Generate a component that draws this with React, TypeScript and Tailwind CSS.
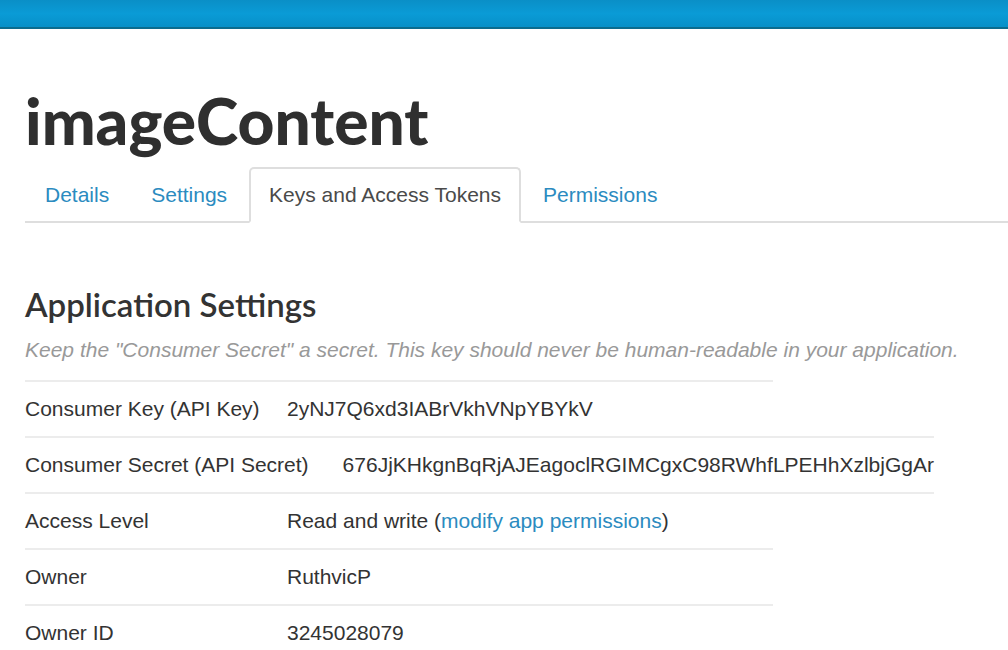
import React from 'react'

interface Row {
  label: string
  value: React.ReactNode
  wide?: boolean
}

const TABS = ['Details', 'Settings', 'Keys and Access Tokens', 'Permissions']
const ACTIVE_TAB = 'Keys and Access Tokens'

const ROWS: Row[] = [
  { label: 'Consumer Key (API Key)', value: '2yNJ7Q6xd3IABrVkhVNpYBYkV' },
  { label: 'Consumer Secret (API Secret)', value: '676JjKHkgnBqRjAJEagoclRGIMCgxC98RWhfLPEHhXzlbjGgAr', wide: true },
  {
    label: 'Access Level',
    value: (
      <>
        Read and write (<a className="text-[#2b8bc0]">modify app permissions</a>)
      </>
    ),
  },
  { label: 'Owner', value: 'RuthvicP' },
  { label: 'Owner ID', value: '3245028079' },
]

function TopBar() {
  return (
    <div className="h-[29px] bg-gradient-to-b from-[#0a8fc7] via-[#0a9bd6] to-[#0790c8] border-b-2 border-[#0b6c8e]" />
  )
}

function Tabs() {
  return (
    <div className="flex border-b-2 border-[#dedede] text-[21px]">
      {TABS.map(t => {
        const active = t === ACTIVE_TAB
        return (
          <div
            key={t}
            className={
              active
                ? 'h-[56px] px-[18px] mr-[2px] -mb-[2px] flex items-center border-2 border-[#dedede] border-b-white bg-white rounded-t-[5px] text-[#4a4a4a]'
                : 'h-[56px] px-[18px] mr-[2px] -mb-[2px] flex items-center border-2 border-transparent text-[#2b8bc0]'
            }
          >
            {t}
          </div>
        )
      })}
    </div>
  )
}

function SettingsRow({ row, afterWide }: { row: Row; afterWide: boolean }) {
  // the wide row carries both rules, so the row after it has none on top
  let cls = 'flex items-center w-fit min-w-[748px] border-[#ececec] '
  if (row.wide) cls += 'h-[58px] border-t-2 border-b-2'
  else if (afterWide) cls += 'h-[54px]'
  else cls += 'h-[56px] border-t-2'

  return (
    <div className={cls}>
      <div className={row.wide ? 'pr-[34px]' : 'w-[262px]'}>{row.label}</div>
      <div>{row.value}</div>
    </div>
  )
}

export default function App() {
  return (
    <div className="min-h-[650px] bg-white font-['Liberation_Sans',Arial,sans-serif] text-[#333]">
      <TopBar />
      <div className="pl-[25px]">
        <h1 className="pt-[58px] pb-[12px] font-['Lato',sans-serif] font-black text-[64px] leading-[68px] text-[#2f2f2f]">
          imageContent
        </h1>
        <Tabs />
        <h2 className="mt-[62px] font-['Lato',sans-serif] font-semibold text-[33px] leading-[38px] text-[#333]">
          Application Settings
        </h2>
        <p className="mt-[15px] italic text-[21px] leading-[24px] text-[#999]">
          Keep the "Consumer Secret" a secret. This key should never be human-readable in your application.
        </p>
        <div className="mt-[18px] text-[21px]">
          {ROWS.map((r, i) => (
            <SettingsRow key={r.label} row={r} afterWide={i > 0 && !!ROWS[i - 1].wide} />
          ))}
        </div>
      </div>
    </div>
  )
}
